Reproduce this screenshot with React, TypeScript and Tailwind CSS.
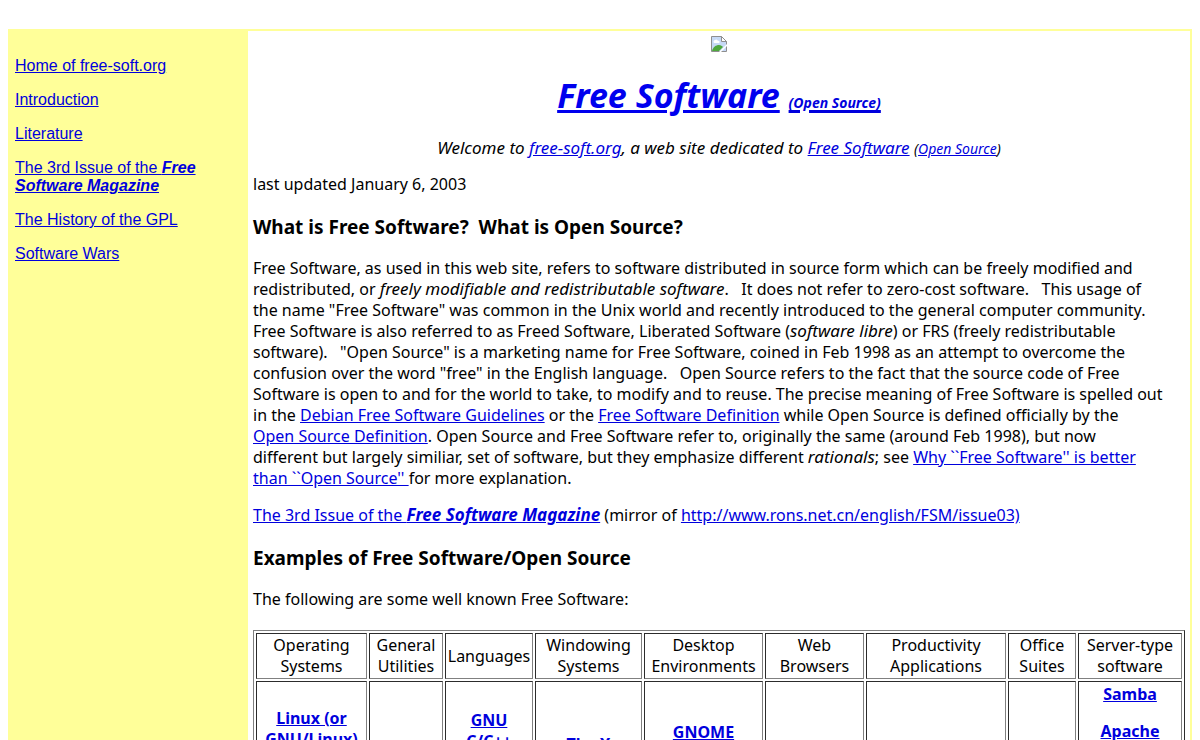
import type { ReactNode } from "react";

const columns = [
  { title: ["Operating", "Systems"], width: "w-[111px]" },
  { title: ["General", "Utilities"], width: "w-[74px]" },
  { title: ["Languages"], width: "w-[88px]" },
  { title: ["Windowing", "Systems"], width: "w-[107px]" },
  { title: ["Desktop", "Environments"], width: "w-[119px]" },
  { title: ["Web", "Browsers"], width: "w-[99px]" },
  { title: ["Productivity", "Applications"], width: "w-[140px]" },
  { title: ["Office", "Suites"], width: "w-[68px]" },
  { title: ["Server-type", "software"], width: "w-[104px]" },
];

function Link({ children }: { children: ReactNode }) {
  return (
    <a href="#" className="text-[#0000dd] underline">
      {children}
    </a>
  );
}

// The italic face is narrow, so it is set one pixel larger than the text round it
function Em({ children }: { children: ReactNode }) {
  return <i className="text-[17px] leading-none">{children}</i>;
}

function Cell({ children, className = "pt-0" }: { children?: ReactNode; className?: string }) {
  return (
    <td className={`border border-t-[#2c2c2c] border-r-[#808080] border-b-[#808080] border-l-[#2c2c2c] px-px text-center align-top font-bold ${className}`}>
      {children}
    </td>
  );
}

function BrokenImage() {
  return (
    <svg width="16" height="16" viewBox="0 0 16 16" role="img" aria-label="Missing image">
      <path d="M.5.5h10l5 5v10H.5z" fill="#c6d9f5" stroke="#8e8e8e" />
      <path d="M10.5.5v5h5z" fill="#fff" stroke="#8e8e8e" />
      <path d="M3 7a2 2 0 0 1 1-3 2 2 0 0 1 3 1 1 1 0 0 1 1 2z" fill="#fff" />
      <path d="M1 15c1-4 4-6 7-6 2 0 3 1 4 2l-4 4z" fill="#4fa83d" />
      <path d="M16 8v2l-6 6H8l4-4z" fill="#fff" />
    </svg>
  );
}

function Sidebar() {
  return (
    <nav className="flex w-[238px] shrink-0 flex-col gap-4 bg-[#ffff99] px-[5px] pt-[26px] font-['Liberation_Sans',Arial,sans-serif] leading-[18px]">
      <p><Link>Home of free-soft.org</Link></p>
      <p><Link>Introduction</Link></p>
      <p><Link>Literature</Link></p>
      <p className="pr-8">
        <Link>The 3rd Issue of the <b><i>Free Software Magazine</i></b></Link>
      </p>
      <p><Link>The History of the GPL</Link></p>
      <p><Link>Software Wars</Link></p>
    </nav>
  );
}

function SoftwareTable() {
  return (
    <table className="mt-5 w-full table-fixed border-separate border-spacing-[2px] border border-t-[#808080] border-r-[#2c2c2c] border-b-[#2c2c2c] border-l-[#808080]">
      <thead>
        <tr>
          {columns.map((column) => (
            <th
              key={column.title.join(" ")}
              className={`${column.width} border border-t-[#2c2c2c] border-r-[#808080] border-b-[#808080] border-l-[#2c2c2c] p-px text-center align-middle font-normal`}
            >
              {column.title.map((line) => (
                <span key={line} className="block">{line}</span>
              ))}
            </th>
          ))}
        </tr>
      </thead>
      <tbody>
        <tr>
          <Cell className="pt-[26px]"><Link>Linux (or GNU/Linux)</Link></Cell>
          <Cell />
          <Cell className="pt-7"><Link>GNU<br />C/C++</Link></Cell>
          <Cell className="pt-[52px]"><Link>The X</Link></Cell>
          <Cell className="pt-10"><Link>GNOME</Link></Cell>
          <Cell />
          <Cell />
          <Cell />
          <Cell className="pt-[2px]">
            <p><Link>Samba</Link></p>
            <p className="mt-4"><Link>Apache</Link></p>
          </Cell>
        </tr>
      </tbody>
    </table>
  );
}

export default function App() {
  return (
    <div className="h-screen overflow-hidden bg-white px-2 pt-[29px] font-['Noto_Sans','Open_Sans',sans-serif] text-[16px] leading-[21px] text-black">
      <div className="flex min-h-full bg-[#ffff99] p-[2px]">
        <Sidebar />
        <main className="min-w-0 flex-1 bg-white p-[5px]">
          <div className="flex h-[21px] justify-center">
            <BrokenImage />
          </div>

          <h1 className="mt-4 text-center text-[34px] leading-[44px] font-bold italic">
            <a href="#" className="text-[#0000ee] underline">Free Software</a>{" "}
            <a href="#" className="text-[#0000dd] underline">
              <span className="text-[14px] leading-none">(Open Source)</span>
            </a>
          </h1>

          <p className="mt-5 text-center text-[17px] italic">
            Welcome to <Link>free-soft.org</Link>, a web site dedicated to <Link>Free Software</Link>{" "}
            <span className="text-[14px] leading-none">(<Link>Open Source</Link>)</span>
          </p>

          <p className="mt-4">last updated January 6, 2003</p>

          <h3 className="mt-5 text-[19px] leading-[24px] font-bold">
            What is Free Software?&nbsp; What is Open Source?
          </h3>

          <p className="mt-[19px]">
            Free Software, as used in this web site, refers to software distributed in source form which can be freely modified and<br />
            redistributed, or <Em>freely modifiable and redistributable software</Em>.&nbsp;&nbsp; It does not refer to zero-cost software.&nbsp;&nbsp; This usage of<br />
            the name "Free Software" was common in the Unix world and recently introduced to the general computer community.<br />
            Free Software is also referred to as Freed Software, Liberated Software (<Em>software libre</Em>) or FRS (freely redistributable<br />
            software).&nbsp;&nbsp; "Open Source" is a marketing name for Free Software, coined in Feb 1998 as an attempt to overcome the<br />
            confusion over the word "free" in the English language.&nbsp;&nbsp; Open Source refers to the fact that the source code of Free<br />
            Software is open to and for the world to take, to modify and to reuse. The precise meaning of Free Software is spelled out<br />
            in the <Link>Debian Free Software Guidelines</Link> or the <Link>Free Software Definition</Link> while Open Source is defined officially by the<br />
            <Link>Open Source Definition</Link>. Open Source and Free Software refer to, originally the same (around Feb 1998), but now<br />
            different but largely similiar, set of software, but they emphasize different <Em>rationals</Em>; see{" "}
            <Link>Why ``Free Software'' is better<br />than ``Open Source'' </Link>for more explanation.
          </p>

          <p className="mt-4">
            <Link>The 3rd Issue of the <b><Em>Free Software Magazine</Em></b></Link> (mirror
            of <Link>http://www.rons.net.cn/english/FSM/issue03)</Link>
          </p>

          <h3 className="mt-5 text-[19px] leading-[24px] font-bold">Examples of Free Software/Open Source</h3>

          <p className="mt-[19px]">The following are some well known Free Software:</p>

          <SoftwareTable />
        </main>
      </div>
    </div>
  );
}
